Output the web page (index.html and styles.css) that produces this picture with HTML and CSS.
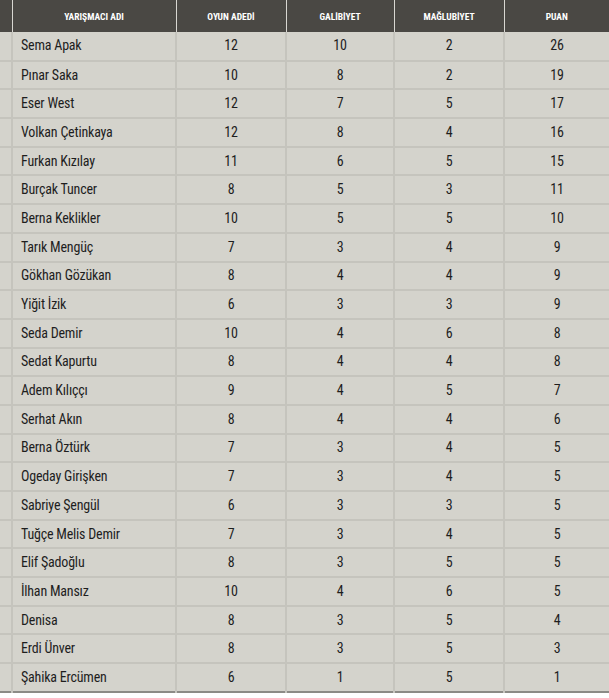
FILE: index.html
```html
<!DOCTYPE html>
<html lang="tr">
<head>
<meta charset="utf-8">
<link rel="stylesheet" href="styles.css">
</head>
<body>
<table class="standings">
  <colgroup>
    <col class="c-edge"><col class="c-name"><col class="c-num"><col class="c-num2"><col class="c-num"><col class="c-last">
  </colgroup>
  <thead>
    <tr><th></th><th>YARIŞMACI ADI</th><th>OYUN ADEDİ</th><th>GALİBİYET</th><th>MAĞLUBİYET</th><th>PUAN</th></tr>
  </thead>
  <tbody>
    <tr><td></td><td class="name">Sema Apak</td><td>12</td><td>10</td><td>2</td><td>26</td></tr>
    <tr><td></td><td class="name">Pınar Saka</td><td>10</td><td>8</td><td>2</td><td>19</td></tr>
    <tr><td></td><td class="name">Eser West</td><td>12</td><td>7</td><td>5</td><td>17</td></tr>
    <tr><td></td><td class="name">Volkan Çetinkaya</td><td>12</td><td>8</td><td>4</td><td>16</td></tr>
    <tr><td></td><td class="name">Furkan Kızılay</td><td>11</td><td>6</td><td>5</td><td>15</td></tr>
    <tr><td></td><td class="name">Burçak Tuncer</td><td>8</td><td>5</td><td>3</td><td>11</td></tr>
    <tr><td></td><td class="name">Berna Keklikler</td><td>10</td><td>5</td><td>5</td><td>10</td></tr>
    <tr><td></td><td class="name">Tarık Mengüç</td><td>7</td><td>3</td><td>4</td><td>9</td></tr>
    <tr><td></td><td class="name">Gökhan Gözükan</td><td>8</td><td>4</td><td>4</td><td>9</td></tr>
    <tr><td></td><td class="name">Yiğit İzik</td><td>6</td><td>3</td><td>3</td><td>9</td></tr>
    <tr><td></td><td class="name">Seda Demir</td><td>10</td><td>4</td><td>6</td><td>8</td></tr>
    <tr><td></td><td class="name">Sedat Kapurtu</td><td>8</td><td>4</td><td>4</td><td>8</td></tr>
    <tr><td></td><td class="name">Adem Kılıççı</td><td>9</td><td>4</td><td>5</td><td>7</td></tr>
    <tr><td></td><td class="name">Serhat Akın</td><td>8</td><td>4</td><td>4</td><td>6</td></tr>
    <tr><td></td><td class="name">Berna Öztürk</td><td>7</td><td>3</td><td>4</td><td>5</td></tr>
    <tr><td></td><td class="name">Ogeday Girişken</td><td>7</td><td>3</td><td>4</td><td>5</td></tr>
    <tr><td></td><td class="name">Sabriye Şengül</td><td>6</td><td>3</td><td>3</td><td>5</td></tr>
    <tr><td></td><td class="name">Tuğçe Melis Demir</td><td>7</td><td>3</td><td>4</td><td>5</td></tr>
    <tr><td></td><td class="name">Elif Şadoğlu</td><td>8</td><td>3</td><td>5</td><td>5</td></tr>
    <tr><td></td><td class="name">İlhan Mansız</td><td>10</td><td>4</td><td>6</td><td>5</td></tr>
    <tr><td></td><td class="name">Denisa</td><td>8</td><td>3</td><td>5</td><td>4</td></tr>
    <tr><td></td><td class="name">Erdi Ünver</td><td>8</td><td>3</td><td>5</td><td>3</td></tr>
    <tr><td></td><td class="name">Şahika Ercümen</td><td>6</td><td>1</td><td>5</td><td>1</td></tr>
  </tbody>
</table>
</body>
</html>
```
FILE: styles.css
```css
html, body {
  margin: 0;
  padding: 0;
  background: #ffffff;
}
.standings {
  width: 609px;
  border-collapse: collapse;
  table-layout: fixed;
  font-family: "Roboto", "DejaVu Sans Condensed", sans-serif;
  font-stretch: 75%;
  border-bottom: 2px solid #8c8b86;
}
.c-edge { width: 12px; }
.c-name { width: 164px; }
.c-num { width: 110px; }
.c-num2 { width: 108px; }
.c-last { width: 105px; }
.standings th {
  background: #4a4844;
  color: #ffffff;
  font-size: 9.5px;
  font-weight: bold;
  height: 32px;
  padding: 0;
  text-align: center;
  border-left: 1px solid #d8d7d2;
  box-sizing: border-box;
}
.standings th:first-child { border-left: none; }
.standings td {
  background: #d4d3cc;
  color: #1e1e1e;
  font-size: 14px;
  letter-spacing: -0.2px;
  height: 28.7px;
  padding: 0 0 1px;
  text-align: center;
  border-top: 2px solid #c5c4bd;
  border-left: 2px solid #c5c4bd;
  box-sizing: border-box;
}
.standings tbody tr:first-child td { border-top: none; }
.standings td:first-child { border-left: none; }
.standings td.name {
  text-align: left;
  padding-left: 8px;
}
```
